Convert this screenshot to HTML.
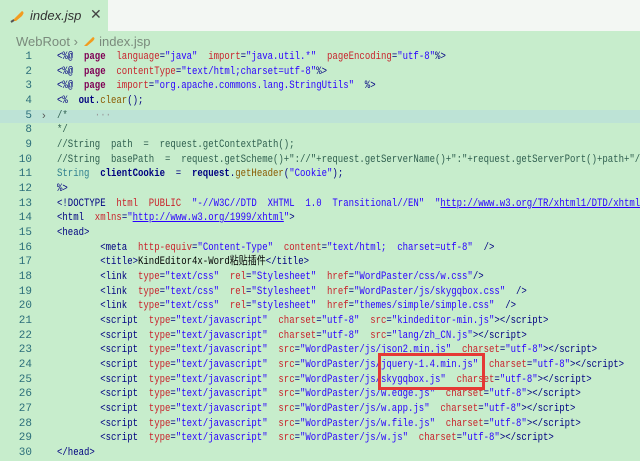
<!DOCTYPE html>
<html><head><meta charset="utf-8"><style>
*{margin:0;padding:0;box-sizing:border-box}
body{width:640px;height:461px;overflow:hidden;background:#c7edcc;position:relative;font-family:"Liberation Mono","Noto Sans CJK SC",monospace;}
.tabbar{position:absolute;left:0;top:0;width:640px;height:31px;background:#f3f7f3}
.tab{position:absolute;left:0;top:0;width:108px;height:31px;background:#c7edcc;font-family:"Liberation Sans",sans-serif;font-style:italic;font-size:13px;color:#333;}
.tab span.t{position:absolute;left:30px;top:8px}
.tab span.x{position:absolute;left:90px;top:6px;font-style:normal;font-size:14px;color:#444}
.crumb{position:absolute;left:16px;top:34px;font-family:"Liberation Sans",sans-serif;font-size:13px;color:#7a8a7c}
.ln{position:absolute;left:0;width:32px;text-align:right;font-size:11px;color:#2b6e7a;line-height:14.67px}
.wrap{position:absolute;left:57px;top:50px;width:583px;height:411px;overflow:hidden}
.code{position:absolute;left:0;top:0;font-size:11px;line-height:14.67px;white-space:pre;color:#000080;transform:scaleX(0.818);transform-origin:0 0}
.hl{position:absolute;left:0;top:110px;width:640px;height:13px;background:#bde3d6}
.t1{color:#000080}.a{color:#c8232c}.v{color:#2a00ff}.k{color:#7f0055;font-weight:bold}.c{color:#2f5f4f}.u{color:#2a00ff;text-decoration:underline}.ty{color:#2f7f8f}.m{color:#8a5a00}
.box{position:absolute;left:378px;top:353px;width:107px;height:37px;border:3px solid #e53935}
</style></head><body>
<div class="tabbar"></div>
<div class="tab"><svg style="position:absolute;left:10px;top:9px" width="16" height="14"><path d="M2 12 L12 2 Q15 3 12 7 L6 12 Z" fill="#f29c1f"/><path d="M1 13 L4 11" stroke="#555" stroke-width="2"/></svg><span class="t">index.jsp</span><span class="x">✕</span></div>
<div class="crumb">WebRoot › <svg width="14" height="12" style="vertical-align:-1px"><path d="M2 11 L11 2 Q14 3 11 6 L5 11 Z" fill="#f29c1f"/></svg> index.jsp</div>
<div class="hl"></div>
<div class="ln" style="top:50px">1<br>2<br>3<br>4<br>5<br>8<br>9<br>10<br>11<br>12<br>13<br>14<br>15<br>16<br>17<br>18<br>19<br>20<br>21<br>22<br>23<br>24<br>25<br>26<br>27<br>28<br>29<br>30</div>
<div style="position:absolute;left:42px;top:110px;font-size:11px;color:#555;font-family:'Liberation Sans',sans-serif">›</div>
<div class="wrap"><div class="code"><span class="t1">&lt;%@</span>  <span class="k">page</span>  <span class="a">language</span>=<span class="v">"java"</span>  <span class="a">import</span>=<span class="v">"java.util.*"</span>  <span class="a">pageEncoding</span>=<span class="v">"utf-8"</span>%&gt;
<span class="t1">&lt;%@</span>  <span class="k">page</span>  <span class="a">contentType</span>=<span class="v">"text/html;charset=utf-8"</span>%&gt;
<span class="t1">&lt;%@</span>  <span class="k">page</span>  <span class="a">import</span>=<span class="v">"org.apache.commons.lang.StringUtils"</span>  %&gt;
<span class="t1">&lt;%</span>  <b>out</b>.<span class="m">clear</span>();
<span class="c">/*     <span style="color:#999">···</span></span>
<span class="c">*/</span>
<span class="c">//String  path  =  request.getContextPath();</span>
<span class="c">//String  basePath  =  request.getScheme()+"://"+request.getServerName()+":"+request.getServerPort()+path+"/";</span>
<span class="ty">String</span>  <b>clientCookie</b>  =  <b>request</b>.<span class="m">getHeader</span>(<span class="v">"Cookie"</span>);
%&gt;
&lt;!DOCTYPE  <span class="a">html</span>  <span class="a">PUBLIC</span>  <span class="v">"-//W3C//DTD  XHTML  1.0  Transitional//EN"</span>  <span class="v">"<span class="u">http://www.w3.org/TR/xhtml1/DTD/xhtml1-transitional.dtd</span>"</span>&gt;
&lt;html  <span class="a">xmlns</span>=<span class="v">"<span class="u">http://www.w3.org/1999/xhtml</span>"</span>&gt;
&lt;head&gt;
        &lt;meta  <span class="a">http-equiv</span>=<span class="v">"Content-Type"</span>  <span class="a">content</span>=<span class="v">"text/html;  charset=utf-8"</span>  /&gt;
        &lt;title&gt;<span style="color:#000">KindEditor4x-Word粘贴插件</span>&lt;/title&gt;
        &lt;link  <span class="a">type</span>=<span class="v">"text/css"</span>  <span class="a">rel</span>=<span class="v">"Stylesheet"</span>  <span class="a">href</span>=<span class="v">"WordPaster/css/w.css"</span>/&gt;
        &lt;link  <span class="a">type</span>=<span class="v">"text/css"</span>  <span class="a">rel</span>=<span class="v">"Stylesheet"</span>  <span class="a">href</span>=<span class="v">"WordPaster/js/skygqbox.css"</span>  /&gt;
        &lt;link  <span class="a">type</span>=<span class="v">"text/css"</span>  <span class="a">rel</span>=<span class="v">"stylesheet"</span>  <span class="a">href</span>=<span class="v">"themes/simple/simple.css"</span>  /&gt;
        &lt;script  <span class="a">type</span>=<span class="v">"text/javascript"</span>  <span class="a">charset</span>=<span class="v">"utf-8"</span>  <span class="a">src</span>=<span class="v">"kindeditor-min.js"</span>&gt;&lt;/script&gt;
        &lt;script  <span class="a">type</span>=<span class="v">"text/javascript"</span>  <span class="a">charset</span>=<span class="v">"utf-8"</span>  <span class="a">src</span>=<span class="v">"lang/zh_CN.js"</span>&gt;&lt;/script&gt;
        &lt;script  <span class="a">type</span>=<span class="v">"text/javascript"</span>  <span class="a">src</span>=<span class="v">"WordPaster/js/json2.min.js"</span>  <span class="a">charset</span>=<span class="v">"utf-8"</span>&gt;&lt;/script&gt;
        &lt;script  <span class="a">type</span>=<span class="v">"text/javascript"</span>  <span class="a">src</span>=<span class="v">"WordPaster/js/jquery-1.4.min.js"</span>  <span class="a">charset</span>=<span class="v">"utf-8"</span>&gt;&lt;/script&gt;
        &lt;script  <span class="a">type</span>=<span class="v">"text/javascript"</span>  <span class="a">src</span>=<span class="v">"WordPaster/js/skygqbox.js"</span>  <span class="a">charset</span>=<span class="v">"utf-8"</span>&gt;&lt;/script&gt;
        &lt;script  <span class="a">type</span>=<span class="v">"text/javascript"</span>  <span class="a">src</span>=<span class="v">"WordPaster/js/w.edge.js"</span>  <span class="a">charset</span>=<span class="v">"utf-8"</span>&gt;&lt;/script&gt;
        &lt;script  <span class="a">type</span>=<span class="v">"text/javascript"</span>  <span class="a">src</span>=<span class="v">"WordPaster/js/w.app.js"</span>  <span class="a">charset</span>=<span class="v">"utf-8"</span>&gt;&lt;/script&gt;
        &lt;script  <span class="a">type</span>=<span class="v">"text/javascript"</span>  <span class="a">src</span>=<span class="v">"WordPaster/js/w.file.js"</span>  <span class="a">charset</span>=<span class="v">"utf-8"</span>&gt;&lt;/script&gt;
        &lt;script  <span class="a">type</span>=<span class="v">"text/javascript"</span>  <span class="a">src</span>=<span class="v">"WordPaster/js/w.js"</span>  <span class="a">charset</span>=<span class="v">"utf-8"</span>&gt;&lt;/script&gt;
&lt;/head&gt;</div></div>
<div class="box"></div>
</body></html>
